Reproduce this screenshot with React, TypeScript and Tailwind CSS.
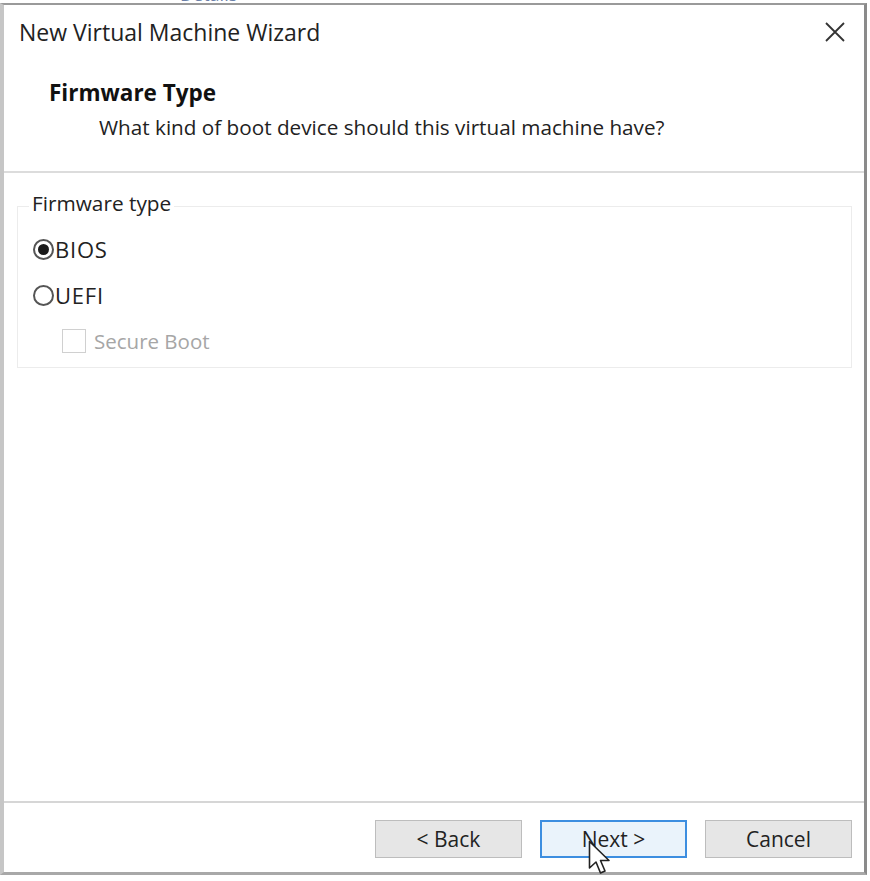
import React from "react";

const font = { fontFamily: '"Open Sans", "Noto Sans", sans-serif' };

function CloseIcon() {
  return (
    <svg width="22" height="22" viewBox="0 0 22 22" aria-hidden="true">
      <path d="M2 2L20 20M20 2L2 20" stroke="#333" strokeWidth="1.8" fill="none" />
    </svg>
  );
}

function Cursor() {
  return (
    <svg width="26" height="38" viewBox="0 0 26 38" aria-hidden="true">
      <path
        d="M1.5 1.5V28L8 22L12.5 33L17 31L12.5 20.5H21Z"
        fill="#fff"
        stroke="#222"
        strokeWidth="1.6"
        strokeLinejoin="round"
      />
    </svg>
  );
}

function Radio({ checked, label }: { checked?: boolean; label: string }) {
  return (
    <div className="flex h-[46px] items-center">
      <span className="flex h-[21px] w-[21px] items-center justify-center rounded-full border-2 border-[#555]">
        {checked && <span className="h-[11px] w-[11px] rounded-full bg-[#1a1a1a]" />}
      </span>
      <span className="ml-[1px] text-[22px] leading-[26px] tracking-[0.8px] text-[#222]">{label}</span>
    </div>
  );
}

function Button({ label, primary }: { label: string; primary?: boolean }) {
  return (
    <button
      className={
        primary
          ? "h-[38px] w-[147px] border-2 border-[#3d8ee0] bg-[#eaf3fb] text-[21px] leading-[26px] text-[#222]"
          : "h-[38px] w-[147px] border border-[#bdbdbd] bg-[#e6e6e6] text-[21px] leading-[26px] text-[#222]"
      }
    >
      {label}
    </button>
  );
}

export default function App() {
  return (
    <div className="relative h-[881px] w-[870px] overflow-hidden bg-white" style={font}>
      {/* bit of the window behind */}
      <div className="h-[3px] overflow-hidden">
        <div className="-mt-[15px] ml-[180px] text-[18px] leading-[18px] text-[#6b7fa8]">Details</div>
      </div>

      <div className="flex h-[872px] w-[867px] flex-col border-t-2 border-r-[3px] border-b-[3px] border-l-4 border-t-[#9a9a9a] border-r-[#8a8a8a] border-b-[#a8a8a8] border-l-[#c6c6c6]">
        {/* title bar */}
        <div className="flex h-[58px] items-center justify-between pr-[18px] pb-[4px] pl-[15px]">
          <span className="text-[23px] leading-[28px] text-[#222]">New Virtual Machine Wizard</span>
          <CloseIcon />
        </div>

        {/* header */}
        <div className="h-[110px] border-b-2 border-[#dcdcdc] pt-[16px] pl-[45px]">
          <div className="text-[22.5px] leading-[28px] font-bold text-[#111]">Firmware Type</div>
          <div className="mt-[6px] pl-[50px] text-[20.7px] leading-[28px] text-[#222]">
            What kind of boot device should this virtual machine have?
          </div>
        </div>

        {/* body */}
        <div className="flex-1 pt-[33px] pr-[12px] pl-[13px]">
          <div className="relative h-[162px] border border-[#ececec] pt-[19px] pl-[15px]">
            <span className="absolute -top-[18px] left-[11px] bg-white px-[3px] text-[20.8px] leading-[28px] text-[#222]">
              Firmware type
            </span>
            <Radio checked label="BIOS" />
            <Radio label="UEFI" />
            <div className="flex h-[46px] items-center pl-[29px]">
              <span className="h-[24px] w-[24px] border border-[#d0d0d0] bg-white" />
              <span className="ml-[8px] text-[20.5px] leading-[28px] text-[#a6a6a6]">Secure Boot</span>
            </div>
          </div>
        </div>

        {/* footer */}
        <div className="flex h-[71px] items-start justify-end gap-[18px] border-t-2 border-[#d6d6d6] pt-[17px] pr-[12px]">
          <Button label="< Back" />
          <Button label="Next >" primary />
          <Button label="Cancel" />
        </div>
      </div>

      <div className="absolute top-[840px] left-[588px]">
        <Cursor />
      </div>
    </div>
  );
}
